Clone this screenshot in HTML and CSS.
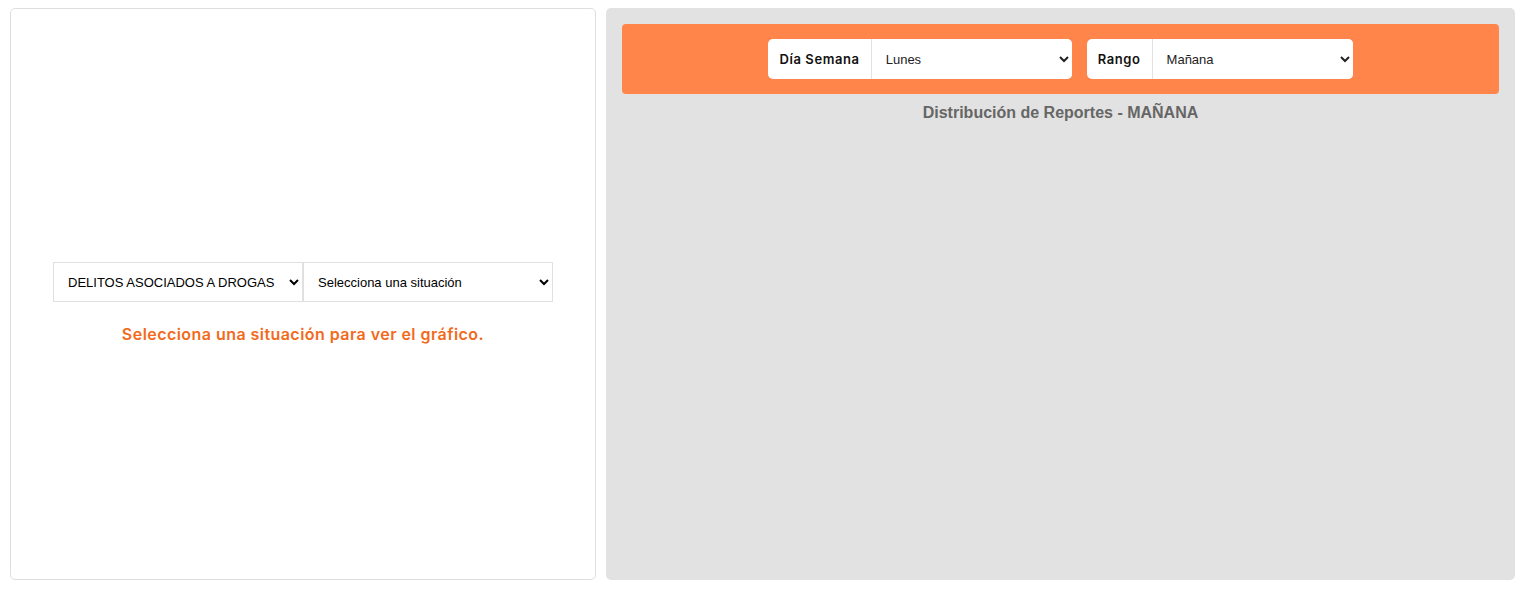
FILE: index.html
```html
<!DOCTYPE html>
<html lang="es">
<head>
<meta charset="utf-8">
<link rel="stylesheet" href="styles.css">
</head>
<body>
<div class="layout">
  <section class="card-left">
    <div class="filters">
      <select class="sel sel-cat">
        <option>DELITOS ASOCIADOS A DROGAS</option>
      </select>
      <select class="sel sel-sit">
        <option>Selecciona una situación</option>
      </select>
    </div>
    <p class="hint">Selecciona una situación para ver el gráfico.</p>
  </section>
  <section class="card-right">
    <div class="toolbar">
      <div class="group">
        <span class="group-label">Día Semana</span>
        <select class="group-sel"><option>Lunes</option></select>
      </div>
      <div class="group">
        <span class="group-label">Rango</span>
        <select class="group-sel"><option>Mañana</option></select>
      </div>
    </div>
    <h3 class="chart-title">Distribución de Reportes - MAÑANA</h3>
  </section>
</div>
</body>
</html>
```
FILE: styles.css
```css
html, body {
  margin: 0;
  padding: 0;
  background: #ffffff;
}
body {
  font-family: "Liberation Sans", Arial, sans-serif;
}
.layout {
  display: flex;
  gap: 10px;
  padding: 8px 20px 15px 10px;
  height: 572px;
}
.card-left {
  width: 586px;
  flex: none;
  box-sizing: border-box;
  border: 1px solid #dedede;
  border-radius: 5px;
  background: #fff;
  display: flex;
  flex-direction: column;
  align-items: center;
  padding-top: 253px;
}
.filters {
  display: flex;
}
.sel {
  height: 40px;
  width: 250px;
  box-sizing: border-box;
  border: 1px solid #e0e0e0;
  border-radius: 0;
  background: #fff;
  font-family: "Liberation Sans", Arial, sans-serif;
  font-size: 13px;
  color: #000;
  padding: 0 10px;
}
.hint {
  margin: 22px 0 0;
  color: #f26b1d;
  font-family: Inter, "Open Sans", sans-serif;
  font-weight: 600;
  font-size: 16px;
  letter-spacing: 0.45px;
}
.card-right {
  flex: 1;
  background: #e2e2e2;
  border-radius: 5px;
  padding: 16px;
  box-sizing: border-box;
}
.toolbar {
  background: #ff854b;
  border-radius: 4px;
  height: 70px;
  display: flex;
  align-items: center;
  justify-content: center;
  gap: 15px;
}
.group {
  display: flex;
  height: 40px;
  background: #fff;
  border-radius: 5px;
  overflow: hidden;
}
.group-label {
  display: flex;
  align-items: center;
  padding: 0 11px;
  border-right: 1px solid #e2e2e2;
  font-family: Inter, "Open Sans", sans-serif;
  font-weight: 600;
  font-size: 13px;
  letter-spacing: 0.6px;
  color: #111;
}
.group-sel {
  width: 200px;
  height: 40px;
  border: none;
  background: #fff;
  font-family: "Liberation Sans", Arial, sans-serif;
  font-size: 13px;
  color: #222;
  padding: 0 10px;
  outline: none;
}
.chart-title {
  margin: 10px 0 0;
  text-align: center;
  font-size: 16px;
  font-weight: bold;
  color: #666;
}
```
